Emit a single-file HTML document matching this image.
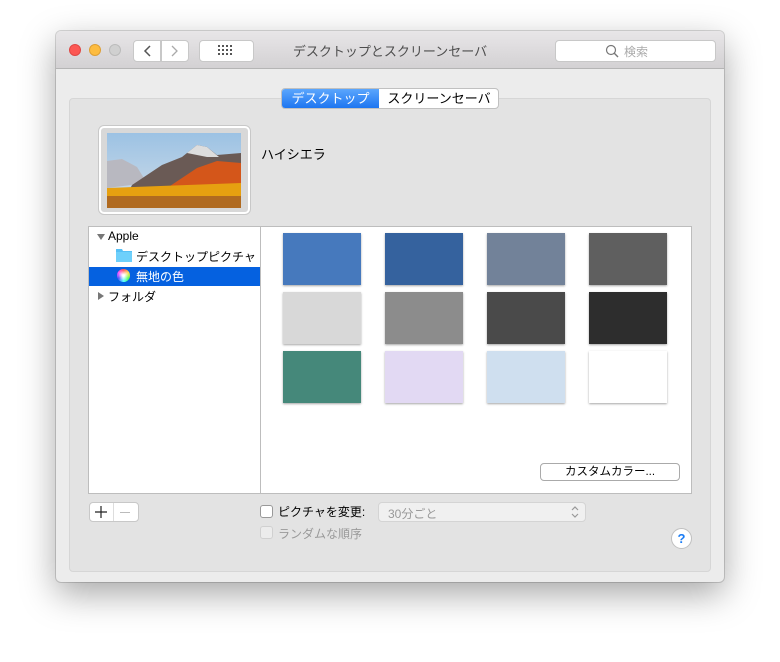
<!DOCTYPE html>
<html><head><meta charset="utf-8"><style>
*{box-sizing:border-box;margin:0;padding:0}
body{width:780px;height:662px;background:#fff;position:relative;overflow:hidden;font-family:"Liberation Sans","Noto Sans CJK JP",sans-serif;font-size:12px;color:#000}
.a{position:absolute}
.win{left:56px;top:31px;width:668px;height:551px;background:#ececec;border-radius:5px;box-shadow:0 12px 35px rgba(0,0,0,.35),0 0 0 1px rgba(0,0,0,.15)}
.tb{left:0;top:0;width:668px;height:38px;background:linear-gradient(#e8e6e8,#d3d1d3);border-bottom:1px solid #b5b5b5;border-radius:5px 5px 0 0}
.dot{width:12px;height:12px;border-radius:50%;top:13px}
.btn{background:#fff;border:1px solid #c8c8c8;border-radius:4px}
.sw{width:78px;height:52px;box-shadow:0 1px 2px rgba(0,0,0,.35)}
</style></head><body>
<div class="a win">
 <div class="a tb">
  <div class="a dot" style="left:13px;background:#fc5753;border:1px solid #df4744"></div>
  <div class="a dot" style="left:33px;background:#fdbc40;border:1px solid #de9f34"></div>
  <div class="a dot" style="left:53px;background:#d0d0d0;border:1px solid #bbb"></div>
  <div class="a btn" style="left:77px;top:9px;width:28px;height:22px;border-radius:4px 0 0 4px"></div>
  <div class="a btn" style="left:105px;top:9px;width:28px;height:22px;border-radius:0 4px 4px 0"></div>
  <svg class="a" style="left:77px;top:9px" width="56" height="22"><path d="M17 6 L12 11 L17 16" stroke="#555" stroke-width="1.5" fill="none"/><path d="M39 6 L44 11 L39 16" stroke="#aaa" stroke-width="1.3" fill="none"/></svg>
  <div class="a btn" style="left:143px;top:9px;width:55px;height:22px"></div>
  <svg class="a" style="left:162px;top:14px" width="16" height="12"><g fill="#555"><rect x="0" y="0" width="2" height="2"/><rect x="4" y="0" width="2" height="2"/><rect x="8" y="0" width="2" height="2"/><rect x="12" y="0" width="2" height="2"/><rect x="0" y="4" width="2" height="2"/><rect x="4" y="4" width="2" height="2"/><rect x="8" y="4" width="2" height="2"/><rect x="12" y="4" width="2" height="2"/><rect x="0" y="8" width="2" height="2"/><rect x="4" y="8" width="2" height="2"/><rect x="8" y="8" width="2" height="2"/><rect x="12" y="8" width="2" height="2"/></g></svg>
  <div class="a" style="left:0;width:668px;top:10px;text-align:center;font-size:13px;color:#4d4d4d">デスクトップとスクリーンセーバ</div>
  <div class="a btn" style="left:499px;top:9px;width:161px;height:22px"></div>
  <svg class="a" style="left:549px;top:13px" width="14" height="14"><circle cx="6" cy="6" r="4.5" stroke="#777" stroke-width="1.2" fill="none"/><path d="M9.3 9.3 L13 13" stroke="#777" stroke-width="1.4"/></svg>
  <div class="a" style="left:568px;top:12px;color:#aaa;font-size:12px">検索</div>
 </div>
 <div class="a" style="left:13px;top:67px;width:642px;height:474px;background:#e3e3e3;border:1px solid #d6d6d6;border-radius:4px"></div>
 <div class="a" style="left:225px;top:57px;width:218px;height:21px;background:#fff;border:1px solid #c0c0c0;border-radius:4px;overflow:hidden">
  <div class="a" style="left:0;top:0;width:97px;height:20px;background:linear-gradient(#5ba6fd,#1a73f0);color:#fff;text-align:center;line-height:19px;font-size:13px">デスクトップ</div>
  <div class="a" style="left:97px;top:0;width:120px;height:20px;text-align:center;line-height:19px;font-size:13px">スクリーンセーバ</div>
 </div>
 <div class="a" style="left:43px;top:95px;width:151px;height:88px;background:#d8d8d8;border:2px solid #fff;border-radius:5px;box-shadow:0 0 0 1px #c8c8c8"></div>
 <svg class="a" style="left:51px;top:102px" width="134" height="75"><defs><linearGradient id="s" x1="0" y1="0" x2="0" y2="1"><stop offset="0" stop-color="#9cc2e4"/><stop offset="1" stop-color="#d0dde8"/></linearGradient></defs><rect width="134" height="75" fill="url(#s)"/><path d="M0 28 L15 26 L30 34 L40 50 L0 55Z" fill="#b8b8c0"/><path d="M25 52 L55 32 L75 24 L90 12 L100 14 L110 22 L134 20 L134 60 L20 62Z" fill="#6a5a55"/><path d="M80 20 L90 12 L100 14 L112 24 L100 24Z" fill="#ddd"/><path d="M60 55 L90 35 L110 28 L134 30 L134 62 L50 64Z" fill="#d4561a"/><path d="M0 55 L134 50 L134 65 L0 65Z" fill="#e6a010"/><rect y="63" width="134" height="12" fill="#b06a20"/></svg>
 <div class="a" style="left:205px;top:113px;font-size:13px">ハイシエラ</div>
 <div class="a" style="left:32px;top:195px;width:604px;height:268px;background:#fff;border:1px solid #bdbdbd"></div>
 <div class="a" style="left:204px;top:196px;width:1px;height:266px;background:#bdbdbd"></div>
 <svg class="a" style="left:40px;top:201px" width="10" height="10"><path d="M1 2 L9 2 L5 8Z" fill="#777"/></svg>
 <div class="a" style="left:52px;top:198px;font-size:12px">Apple</div>
 <svg class="a" style="left:60px;top:217px" width="16" height="14"><path d="M0 1 h6 l1 2 h9 v11 h-16z" fill="#56c0f6"/><rect x="0" y="4" width="16" height="10" fill="#6ed0fb"/></svg>
 <div class="a" style="left:80px;top:217px">デスクトップピクチャ</div>
 <div class="a" style="left:33px;top:236px;width:171px;height:19px;background:#0561e0"></div>
 <div class="a" style="left:61px;top:238px;width:13px;height:13px;border-radius:50%;background:radial-gradient(circle,#fff 10%,transparent 60%),conic-gradient(#f55,#fd5,#5f5,#5ff,#55f,#f5f,#f55)"></div>
 <div class="a" style="left:80px;top:237px;color:#fff">無地の色</div>
 <svg class="a" style="left:40px;top:260px" width="10" height="10"><path d="M2 1 L8 5 L2 9Z" fill="#777"/></svg>
 <div class="a" style="left:52px;top:257px">フォルダ</div>
 <div class="a sw" style="left:227px;top:202px;background:#4679bd"></div>
 <div class="a sw" style="left:329px;top:202px;background:#35629e"></div>
 <div class="a sw" style="left:431px;top:202px;background:#728299"></div>
 <div class="a sw" style="left:533px;top:202px;background:#5f5f5f"></div>
 <div class="a sw" style="left:227px;top:261px;background:#d8d8d8"></div>
 <div class="a sw" style="left:329px;top:261px;background:#8c8c8c"></div>
 <div class="a sw" style="left:431px;top:261px;background:#4a4a4a"></div>
 <div class="a sw" style="left:533px;top:261px;background:#2d2d2d"></div>
 <div class="a sw" style="left:227px;top:320px;background:#45887a"></div>
 <div class="a sw" style="left:329px;top:320px;background:#e2d9f3"></div>
 <div class="a sw" style="left:431px;top:320px;background:#cfdfef"></div>
 <div class="a sw" style="left:533px;top:320px;background:#fff"></div>
 <div class="a btn" style="left:484px;top:432px;width:140px;height:18px;border-color:#aaa;text-align:center;line-height:16px;font-size:11.5px">カスタムカラー...</div>
 <div class="a btn" style="left:33px;top:471px;width:50px;height:20px"></div>
 <div class="a" style="left:57px;top:472px;width:1px;height:18px;background:#ddd"></div>
 <svg class="a" style="left:38px;top:474px" width="14" height="14"><path d="M7 1 V13 M1 7 H13" stroke="#222" stroke-width="1.2"/></svg>
 <div class="a" style="left:64px;top:481px;width:10px;height:1px;background:#bbb"></div>
 <div class="a btn" style="left:204px;top:474px;width:13px;height:13px;border-color:#999;border-radius:3px"></div>
 <div class="a" style="left:222px;top:472px">ピクチャを変更:</div>
 <div class="a" style="left:322px;top:471px;width:208px;height:20px;background:#f0f0f0;border:1px solid #d4d4d4;border-radius:4px;color:#999;padding:2px 0 0 9px">30分ごと</div>
 <svg class="a" style="left:514px;top:473px" width="10" height="16"><path d="M2 6 L5 3 L8 6 M2 10 L5 13 L8 10" stroke="#999" stroke-width="1.2" fill="none"/></svg>
 <div class="a" style="left:204px;top:495px;width:13px;height:13px;background:#ececec;border:1px solid #d0d0d0;border-radius:3px"></div>
 <div class="a" style="left:222px;top:494px;color:#999">ランダムな順序</div>
 <div class="a" style="left:615px;top:497px;width:21px;height:21px;border-radius:50%;background:#fff;border:1px solid #c0c0c0;color:#1a7cf5;text-align:center;font-weight:bold;font-size:13px;line-height:19px">?</div>
</div>
</body></html>
